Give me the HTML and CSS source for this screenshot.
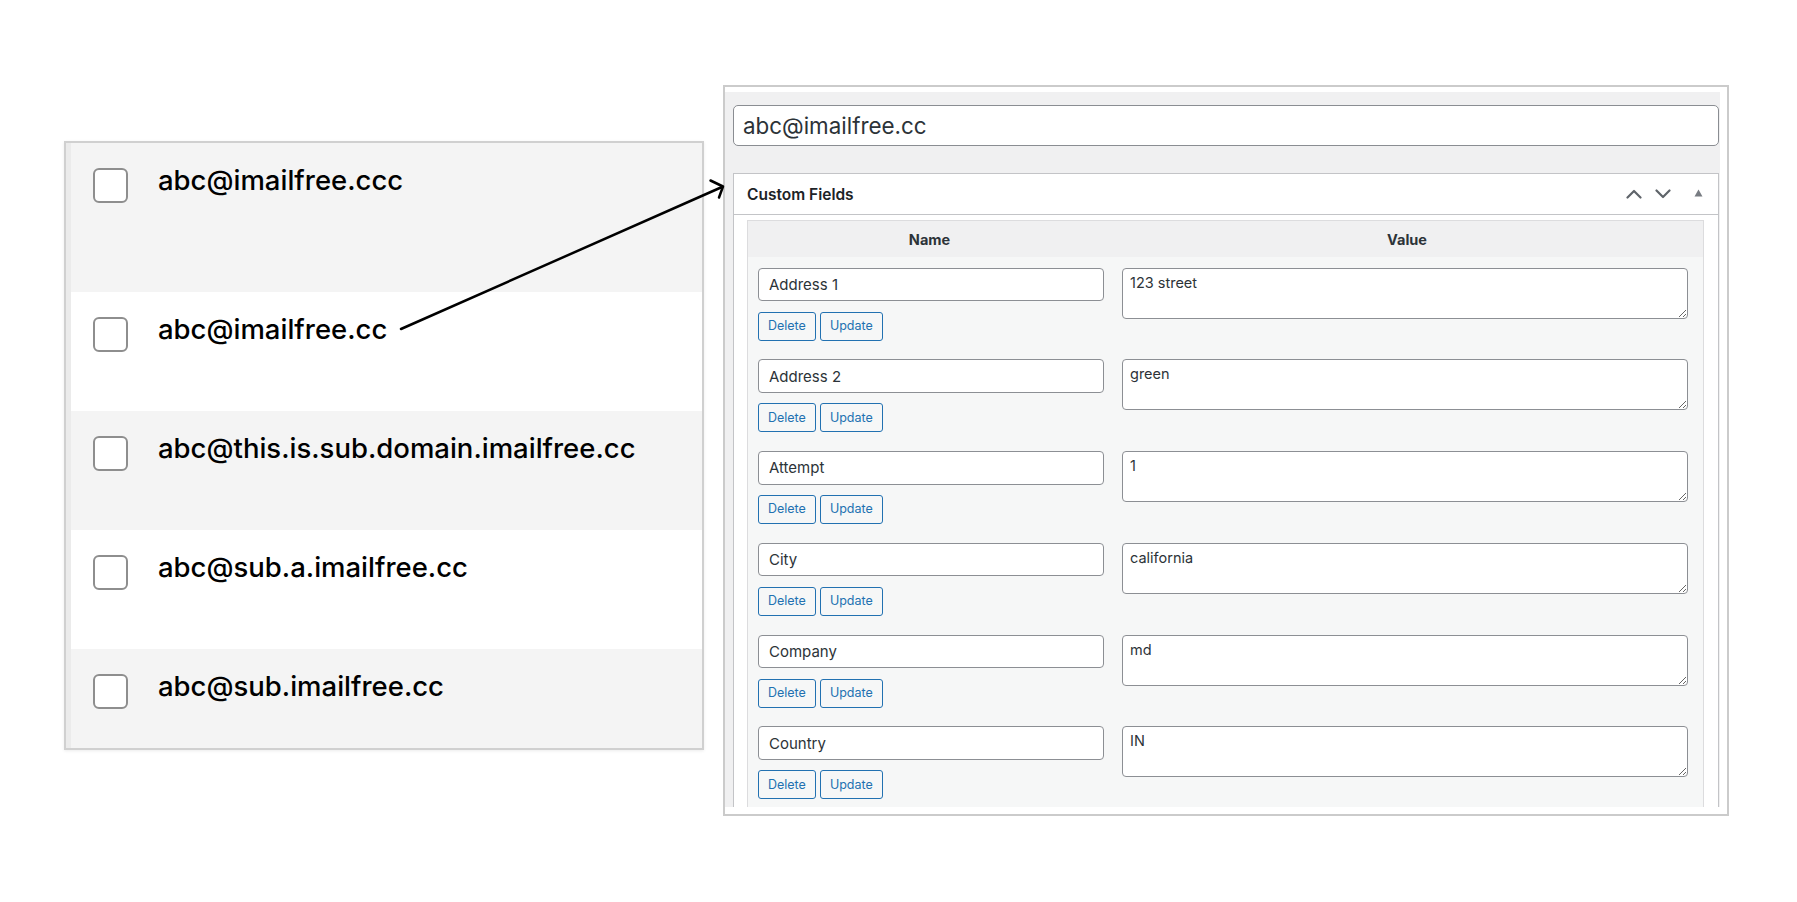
FILE: index.html
```html
<!DOCTYPE html>
<html lang="en">
<head>
<meta charset="utf-8">
<title>Custom fields</title>
<link rel="stylesheet" href="styles.css">
</head>
<body>
<div class="stage">
  <div class="list">
    <div class="row row-first gray"><input type="checkbox" class="cb"><span class="email">abc@imailfree.ccc</span></div>
    <div class="row"><input type="checkbox" class="cb"><span class="email">abc@imailfree.cc</span></div>
    <div class="row gray"><input type="checkbox" class="cb"><span class="email">abc@this.is.sub.domain.imailfree.cc</span></div>
    <div class="row"><input type="checkbox" class="cb"><span class="email">abc@sub.a.imailfree.cc</span></div>
    <div class="row gray row-last"><input type="checkbox" class="cb"><span class="email">abc@sub.imailfree.cc</span></div>
  </div>

  <div class="editor">
    <div class="editor-inner">
      <input class="title" type="text" value="abc@imailfree.cc">
      <div class="postbox">
        <div class="postbox-header">
          <h2>Custom Fields</h2>
          <div class="handles">
            <svg class="chev" width="16" height="10" viewBox="0 0 16 10"><path d="M1.5 8.5 L8 2 L14.5 8.5"/></svg>
            <svg class="chev" width="16" height="10" viewBox="0 0 16 10"><path d="M1.5 1.5 L8 8 L14.5 1.5"/></svg>
            <svg class="tri" width="9" height="8" viewBox="0 0 9 8"><path d="M0.5 7.5 L4.5 0.5 L8.5 7.5 Z"/></svg>
          </div>
        </div>
        <div class="inside">
          <div class="cf-table">
            <div class="cf-head"><div>Name</div><div>Value</div></div>
            <div class="cf-row">
              <div class="cf-name"><input type="text" value="Address 1"><div class="btns"><button>Delete</button><button>Update</button></div></div>
              <div class="cf-value"><textarea>123 street</textarea></div>
            </div>
            <div class="cf-row">
              <div class="cf-name"><input type="text" value="Address 2"><div class="btns"><button>Delete</button><button>Update</button></div></div>
              <div class="cf-value"><textarea>green</textarea></div>
            </div>
            <div class="cf-row">
              <div class="cf-name"><input type="text" value="Attempt"><div class="btns"><button>Delete</button><button>Update</button></div></div>
              <div class="cf-value"><textarea>1</textarea></div>
            </div>
            <div class="cf-row">
              <div class="cf-name"><input type="text" value="City"><div class="btns"><button>Delete</button><button>Update</button></div></div>
              <div class="cf-value"><textarea>california</textarea></div>
            </div>
            <div class="cf-row">
              <div class="cf-name"><input type="text" value="Company"><div class="btns"><button>Delete</button><button>Update</button></div></div>
              <div class="cf-value"><textarea>md</textarea></div>
            </div>
            <div class="cf-row">
              <div class="cf-name"><input type="text" value="Country"><div class="btns"><button>Delete</button><button>Update</button></div></div>
              <div class="cf-value"><textarea>IN</textarea></div>
            </div>
          </div>
        </div>
      </div>
    </div>
  </div>

  <svg class="arrow" width="1797" height="902" viewBox="0 0 1797 902">
    <path d="M401 329 L722 187"/>
    <path d="M710.5 180.5 L723 186.5 L719 197.5"/>
  </svg>
</div>
</body>
</html>
```

FILE: styles.css
```css
* { box-sizing: border-box; }

html, body {
  margin: 0;
  background: #ffffff;
}

body {
  font-family: Inter, "Liberation Sans", sans-serif;
}

.stage {
  position: relative;
  width: 1797px;
  height: 902px;
  display: flex;
  align-items: flex-start;
  gap: 19px;
  padding: 85px 0 0 64px;
}

/* ---------- left list ---------- */
.list {
  margin-top: 56px;
  width: 640px;
  height: 609px;
  border: 2px solid #d0d0d0;
  padding-left: 5px;
  background: #ebebeb;
  display: flex;
  flex-direction: column;
  box-shadow: 0 1px 3px rgba(0, 0, 0, 0.08);
}

.row {
  flex-shrink: 0;
  height: 119px;
  background: #ffffff;
  display: flex;
  align-items: flex-start;
  padding: 25px 0 0 22px;
}

.row.gray { background: #f4f4f4; }
.row-first { height: 149px; }
.row-last { flex: 1; }

.cb {
  appearance: none;
  -webkit-appearance: none;
  margin: 0;
  width: 35px;
  height: 35px;
  border: 2px solid #8e8e8e;
  border-radius: 6px;
  background: #ffffff;
  flex-shrink: 0;
}

.email {
  margin-left: 30px;
  margin-top: -2px;
  font-size: 27.5px;
  line-height: 28px;
  font-weight: 500;
  color: #000000;
  white-space: nowrap;
}

/* ---------- right editor ---------- */
.editor {
  width: 1006px;
  height: 731px;
  border: 2px solid #cbcbcb;
  background: #ffffff;
  padding: 5px 7px 7px 0;
}

.editor-inner {
  height: 100%;
  background: #f0f0f1;
  padding: 13px 1px 0 8px;
  overflow: hidden;
}

.title {
  display: block;
  width: 100%;
  height: 41px;
  margin: 0;
  border: 1.5px solid #8a8d92;
  border-radius: 5px;
  background: #ffffff;
  font-family: Inter, "Liberation Sans", sans-serif;
  font-size: 22.4px;
  color: #2c3338;
  padding: 0 9px;
  outline: none;
}

.postbox {
  margin-top: 27px;
  background: #ffffff;
  border: 1px solid #c3c4c7;
}

.postbox-header {
  height: 41px;
  border-bottom: 1px solid #c3c4c7;
  display: flex;
  align-items: center;
  justify-content: space-between;
  padding: 0 15px 0 13px;
}

.postbox-header h2 {
  margin: 0;
  font-size: 15.5px;
  font-weight: 600;
  color: #1d2327;
}

.handles {
  display: flex;
  align-items: center;
}

.chev {
  display: block;
  margin-right: 13px;
}

.chev path {
  fill: none;
  stroke: #5f646a;
  stroke-width: 2.2;
  stroke-linecap: round;
  stroke-linejoin: round;
}

.chev + .chev { margin-right: 23px; }

.tri { display: block; margin-top: -2px; }
.tri path { fill: #787c82; }

.inside {
  padding: 5px 14px 0 13px;
}

.cf-table {
  border: 1px solid #dcdcde;
  background: #f6f7f7;
}

.cf-head {
  display: grid;
  grid-template-columns: 363px 1fr;
  height: 36px;
  align-items: center;
  background: #f0f0f1;
  text-align: center;
  font-size: 14.5px;
  font-weight: 700;
  color: #2c3338;
}

.cf-row {
  display: grid;
  grid-template-columns: 363px 1fr;
  align-items: start;
  height: 91.8px;
  padding-top: 10.5px;
}

.cf-name {
  padding: 0 7px 0 10px;
}

.cf-name input {
  display: block;
  width: 100%;
  height: 33.5px;
  margin: 0;
  border: 1px solid #8c8f94;
  border-radius: 4px;
  background: #ffffff;
  font-family: Inter, "Liberation Sans", sans-serif;
  font-size: 15px;
  color: #2c3338;
  padding: 0 10px;
  outline: none;
}

.btns {
  display: flex;
  gap: 4px;
  margin-top: 10.5px;
}

.btns button {
  height: 29px;
  margin: 0;
  padding: 0 9px;
  border: 1px solid #2271b1;
  border-radius: 3px;
  background: #f6f7f7;
  color: #2271b1;
  font-family: Inter, "Liberation Sans", sans-serif;
  font-size: 12.5px;
  line-height: 1;
}

.cf-value {
  padding: 0 15px 0 11px;
}

.cf-value textarea {
  display: block;
  width: 100%;
  height: 51px;
  margin: 0;
  border: 1px solid #8c8f94;
  border-radius: 4px;
  background: #ffffff;
  font-family: Inter, "Liberation Sans", sans-serif;
  font-size: 14.5px;
  line-height: 1.4;
  color: #2c3338;
  padding: 4px 7px;
  resize: vertical;
  outline: none;
}

/* ---------- annotation arrow ---------- */
.arrow {
  position: absolute;
  left: 0;
  top: 0;
  pointer-events: none;
}

.arrow path {
  fill: none;
  stroke: #000000;
  stroke-width: 2.5;
  stroke-linecap: round;
  stroke-linejoin: round;
}
```
